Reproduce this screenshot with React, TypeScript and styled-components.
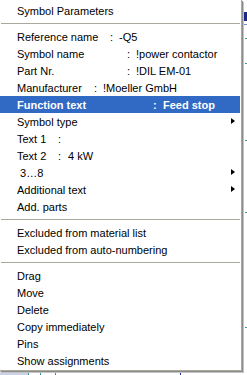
import styled, { createGlobalStyle } from "styled-components";

const GlobalStyle = createGlobalStyle`
    html, body {
        margin: 0;
        padding: 0;
        width: 247px;
        height: 375px;
        overflow: hidden;
        background: #f4f7fb;
    }
`

const Page = styled.div`
    position: relative;
    width: 247px;
    height: 375px;
    overflow: hidden;
    background: #ffffff;
`

const Backdrop = styled.svg`
    position: absolute;
    left: 0;
    top: 0;
`

const Menu = styled.div`
    position: relative;
    width: 241px;
    padding: 2px 0 1px 0;
    background: #ffffff;
    border-right: 1px solid #aca899;
    border-bottom: 1px solid #aca899;
    box-shadow: 1px 1px 0 #8c8c8c, 2px 2px 0 #c4c4c4;
    font-family: "Liberation Sans", Arial, sans-serif;
    font-size: 11px;
    color: #000000;
`

const Item = styled.div<{ active?: boolean }>`
    position: relative;
    display: flex;
    align-items: center;
    height: 17px;
    margin-right: 1px;
    padding-left: 17px;
    white-space: pre;
    background: ${props => props.active ? "#316ac5" : "transparent"};
    color: ${props => props.active ? "#ffffff" : "#000000"};
    font-weight: ${props => props.active ? "bold" : "normal"};
`

const Label = styled.span<{ width: number }>`
    display: inline-block;
    width: ${props => props.width}px;
`

const Colon = styled.span<{ width?: number }>`
    display: inline-block;
    width: ${props => props.width ?? 9}px;
`

const Arrow = styled.span`
    position: absolute;
    right: 5px;
    top: 5px;
    width: 0;
    height: 0;
    border-top: 3.5px solid transparent;
    border-bottom: 3.5px solid transparent;
    border-left: 4px solid #000000;
`

const Separator = styled.div`
    height: 9px;
    display: flex;
    align-items: center;
    padding: 0 1px;
    &::after {
        content: "";
        display: block;
        width: 100%;
        height: 1px;
        margin-top: -1px;
        background: #aca899;
    }
`

type Field = { label: string, width: number, value: string, colon?: number }

const fields: Field[] = [
    { label: "Reference name", width: 93, value: "-Q5" },
    { label: "Symbol name", width: 110, value: "!power contactor" },
    { label: "Part Nr.", width: 110, value: "!DIL EM-01" },
    { label: "Manufacturer", width: 77, value: "!Moeller GmbH" },
]

function FieldItem({ label, width, value, colon, active }: Field & { active?: boolean }) {
    return <Item active={active}>
        <Label width={width}>{label}</Label>
        <Colon width={colon}>:</Colon>
        {value}
    </Item>
}

export default function App() {
    return <Page>
        <GlobalStyle />
        <Backdrop width="247" height="375">
            <rect x="0" y="370" width="28" height="5" fill="#c9d3e3" />
            <rect x="28" y="370" width="1" height="5" fill="#3a8f8f" />
            <rect x="40" y="370" width="1" height="5" fill="#3a8f8f" />
            <rect x="55" y="370" width="1" height="5" fill="#3a8f8f" />
            <rect x="180" y="370" width="1" height="5" fill="#1c2a8a" />
            <rect x="244" y="12" width="3" height="9" fill="#1c2a8a" />
            <rect x="244" y="24" width="3" height="1" fill="#6f8fd0" />
            <rect x="245" y="38" width="2" height="1" fill="#3a8f8f" />
            <rect x="245" y="63" width="2" height="1" fill="#3a8f8f" />
            <rect x="245" y="140" width="2" height="1" fill="#3a8f8f" />
            <rect x="245" y="212" width="2" height="1" fill="#3a8f8f" />
            <rect x="245" y="327" width="2" height="1" fill="#3a8f8f" />
        </Backdrop>
        <Menu>
            <Item>Symbol Parameters</Item>
            <Separator />
            {fields.map(field => <FieldItem key={field.label} {...field} />)}
            <FieldItem label="Function text" width={136} colon={10} value="Feed stop" active />
            <Item>Symbol type<Arrow /></Item>
            <FieldItem label="Text 1" width={41} colon={10} value="" />
            <FieldItem label="Text 2" width={41} colon={10} value="4 kW" />
            <Item> 3…8<Arrow /></Item>
            <Item>Additional text<Arrow /></Item>
            <Item>Add. parts</Item>
            <Separator />
            <Item>Excluded from material list</Item>
            <Item>Excluded from auto-numbering</Item>
            <Separator />
            <Item>Drag</Item>
            <Item>Move</Item>
            <Item>Delete</Item>
            <Item>Copy immediately</Item>
            <Item>Pins</Item>
            <Item>Show assignments</Item>
        </Menu>
    </Page>
}
